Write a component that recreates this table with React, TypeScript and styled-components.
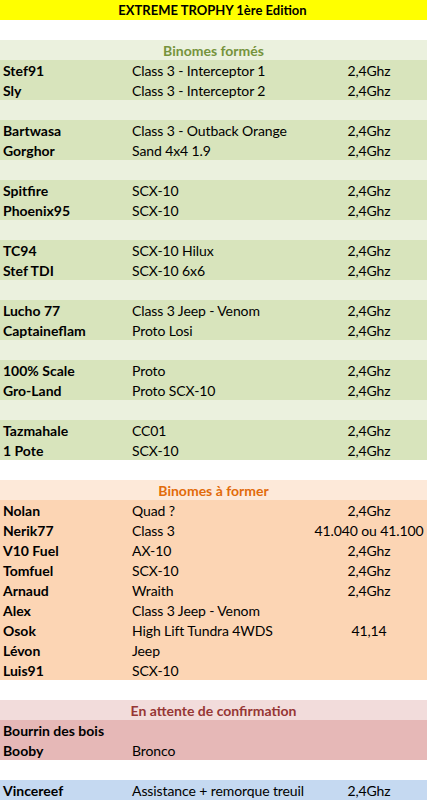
import React from "react";
import styled, { createGlobalStyle } from "styled-components";

type Tone = "green" | "orange" | "red" | "blue";

const palette: Record<Tone, { head: string; row: string; text: string }> = {
  green: { head: "#ebf1de", row: "#d8e4bc", text: "#76933c" },
  orange: { head: "#fde9d9", row: "#fcd5b4", text: "#e26b0a" },
  red: { head: "#f2dcdb", row: "#e6b8b7", text: "#963634" },
  blue: { head: "#dce6f1", row: "#c5d9f1", text: "#366092" },
};

const GlobalStyle = createGlobalStyle`
  body {
    margin: 0;
    background: #ffffff;
    font-family: "Lato", "Liberation Sans", sans-serif;
    color: #000;
  }
`;

const Sheet = styled.div`
  width: 427px;
  display: flex;
  flex-direction: column;
`;

const TitleRow = styled.div`
  height: 20px;
  background: #ffff00;
  font-weight: bold;
  font-size: 13px;
  display: flex;
  align-items: center;
  justify-content: center;
  padding-right: 2px;
`;

const BlankRow = styled.div<{ $bg?: string }>`
  height: 20px;
  background: ${(p) => p.$bg || "#ffffff"};
`;

const SectionHead = styled.div<{ $tone: Tone }>`
  height: 20px;
  background: ${(p) => palette[p.$tone].head};
  color: ${(p) => palette[p.$tone].text};
  font-weight: bold;
  font-size: 14px;
  display: flex;
  align-items: center;
  justify-content: center;
  padding-top: 1px;
  box-sizing: border-box;
`;

const Row = styled.div<{ $tone: Tone }>`
  height: 20px;
  background: ${(p) => palette[p.$tone].row};
  display: grid;
  grid-template-columns: 132px 181px 1fr;
  align-items: center;
  font-size: 14px;
  letter-spacing: -0.1px;
  white-space: nowrap;
  padding-top: 1px;
  box-sizing: border-box;
`;

const Name = styled.span`
  padding-left: 3px;
  font-weight: bold;
  letter-spacing: 0;
`;

const Model = styled.span``;

const Freq = styled.span`
  text-align: center;
  padding-right: 2px;
`;

type Entry = [string, string, string];

const formed: Entry[][] = [
  [
    ["Stef91", "Class 3 - Interceptor 1", "2,4Ghz"],
    ["Sly", "Class 3 - Interceptor 2", "2,4Ghz"],
  ],
  [
    ["Bartwasa", "Class 3 - Outback Orange", "2,4Ghz"],
    ["Gorghor", "Sand 4x4 1.9", "2,4Ghz"],
  ],
  [
    ["Spitfire", "SCX-10", "2,4Ghz"],
    ["Phoenix95", "SCX-10", "2,4Ghz"],
  ],
  [
    ["TC94", "SCX-10 Hilux", "2,4Ghz"],
    ["Stef TDI", "SCX-10 6x6", "2,4Ghz"],
  ],
  [
    ["Lucho 77", "Class 3 Jeep - Venom", "2,4Ghz"],
    ["Captaineflam", "Proto Losi", "2,4Ghz"],
  ],
  [
    ["100% Scale", "Proto", "2,4Ghz"],
    ["Gro-Land", "Proto SCX-10", "2,4Ghz"],
  ],
  [
    ["Tazmahale", "CC01", "2,4Ghz"],
    ["1 Pote", "SCX-10", "2,4Ghz"],
  ],
];

const toForm: Entry[] = [
  ["Nolan", "Quad ?", "2,4Ghz"],
  ["Nerik77", "Class 3", "41.040 ou 41.100"],
  ["V10 Fuel", "AX-10", "2,4Ghz"],
  ["Tomfuel", "SCX-10", "2,4Ghz"],
  ["Arnaud", "Wraith", "2,4Ghz"],
  ["Alex", "Class 3 Jeep - Venom", ""],
  ["Osok", "High Lift Tundra 4WDS", "41,14"],
  ["Lévon", "Jeep", ""],
  ["Luis91", "SCX-10", ""],
];

const pending: Entry[] = [
  ["Bourrin des bois", "", ""],
  ["Booby", "Bronco", ""],
];

const DataRow = ({ tone, entry }: { tone: Tone; entry: Entry }) => (
  <Row $tone={tone}>
    <Name>{entry[0]}</Name>
    <Model>{entry[1]}</Model>
    <Freq>{entry[2]}</Freq>
  </Row>
);

const App = () => {
  return (
    <>
      <GlobalStyle />
      <Sheet>
        <TitleRow>EXTREME TROPHY 1ère Edition</TitleRow>
        <BlankRow />
        <SectionHead $tone="green">Binomes formés</SectionHead>
        {formed.map((pair, i) => (
          <React.Fragment key={i}>
            {i > 0 && <BlankRow $bg={palette.green.head} />}
            {pair.map((e) => (
              <DataRow key={e[0]} tone="green" entry={e} />
            ))}
          </React.Fragment>
        ))}
        <BlankRow />
        <SectionHead $tone="orange">Binomes à former</SectionHead>
        {toForm.map((e) => (
          <DataRow key={e[0]} tone="orange" entry={e} />
        ))}
        <BlankRow />
        <SectionHead $tone="red">En attente de confirmation</SectionHead>
        {pending.map((e) => (
          <DataRow key={e[0]} tone="red" entry={e} />
        ))}
        <BlankRow />
        <DataRow tone="blue" entry={["Vincereef", "Assistance + remorque treuil", "2,4Ghz"]} />
      </Sheet>
    </>
  );
};

export default App;
